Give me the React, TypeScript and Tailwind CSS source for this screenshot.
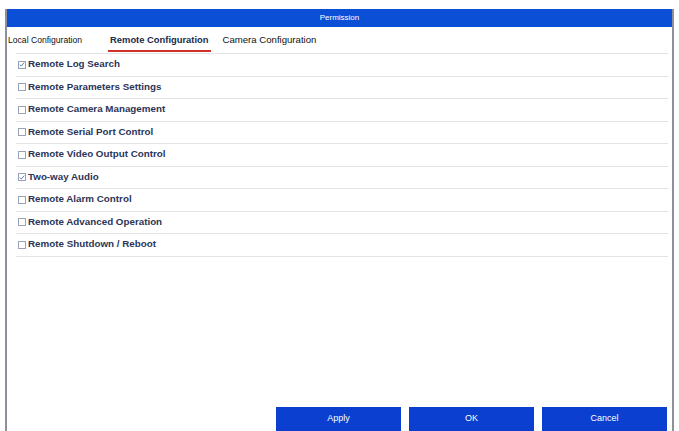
const items = [
  { label: "Remote Log Search", checked: true },
  { label: "Remote Parameters Settings", checked: false },
  { label: "Remote Camera Management", checked: false },
  { label: "Remote Serial Port Control", checked: false },
  { label: "Remote Video Output Control", checked: false },
  { label: "Two-way Audio", checked: true },
  { label: "Remote Alarm Control", checked: false },
  { label: "Remote Advanced Operation", checked: false },
  { label: "Remote Shutdown / Reboot", checked: false },
];

function Box({ checked }: { checked: boolean }) {
  return (
    <span className="w-[8px] h-[8px] border border-[#9aa3b5] bg-white flex items-center justify-center shrink-0">
      {checked && (
        <svg viewBox="0 0 8 8" className="w-[7px] h-[7px]">
          <path d="M1 4.2 L3 6 L7 1.5" fill="none" stroke="#4a6fb5" strokeWidth="1.2" />
        </svg>
      )}
    </span>
  );
}

export default function App() {
  return (
    <div
      className="w-[679px] h-[431px] bg-white overflow-hidden pt-[9px] pl-[5px]"
      style={{ fontFamily: '"Liberation Sans", Arial, sans-serif' }}
    >
      <div className="w-[669px] h-[422px] border-l-2 border-r-2 border-[#8d9099] flex flex-col">
        <div className="h-[18px] bg-[#0a4fd6] text-white text-[8px] flex items-center justify-center">
          Permission
        </div>
        <div className="h-[26px] flex items-center text-[#111] pl-[1px]">
          <span className="mr-[28px] text-[8.6px]">Local Configuration</span>
          <span className="relative mr-[14px] text-[9.4px] font-semibold text-[#202a4a]">
            Remote Configuration
            <span className="absolute left-[-2px] right-[-2px] bottom-[-5px] h-[2px] bg-[#d2302b]" />
          </span>
          <span className="text-[9.6px]">Camera Configuration</span>
        </div>
        <div className="ml-[9px] mr-[4px] border-t border-[#e3e3e3]">
          {items.map((it) => (
            <div
              key={it.label}
              className="h-[22.5px] border-b border-[#e3e3e3] flex items-center gap-[2px] pl-[2px] text-[9.8px] font-bold text-[#2c3557]"
            >
              <Box checked={it.checked} />
              <span>{it.label}</span>
            </div>
          ))}
        </div>
        <div className="flex-1" />
        <div className="flex justify-end gap-[8px] pr-[5px]">
          {["Apply", "OK", "Cancel"].map((b) => (
            <div
              key={b}
              className="w-[125px] h-[24px] bg-[#0a3fd0] text-white text-[9px] flex items-center justify-center"
            >
              {b}
            </div>
          ))}
        </div>
      </div>
    </div>
  );
}
